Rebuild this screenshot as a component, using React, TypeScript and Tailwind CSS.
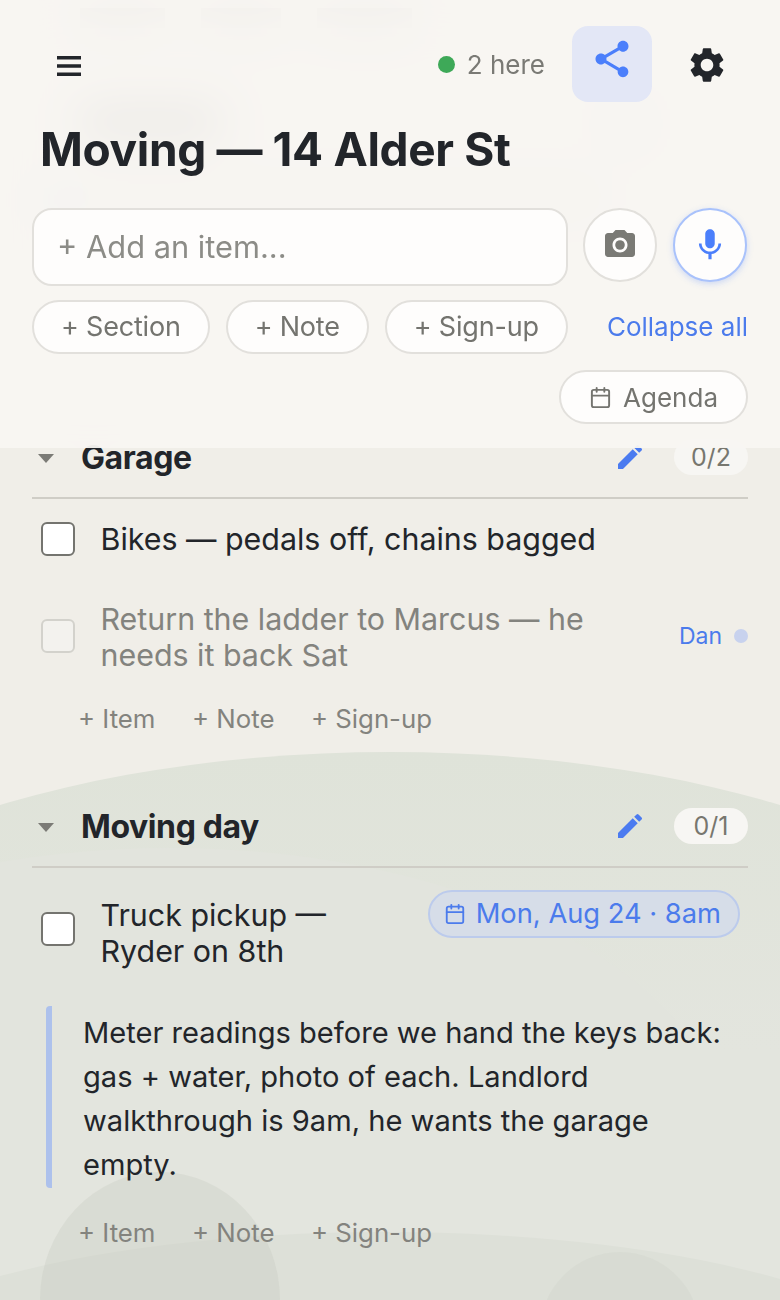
import { Calendar } from "lucide-react"
import { MdCameraAlt, MdEdit, MdMic, MdSettings, MdShare } from "react-icons/md"

function Backdrop() {
  return (
    <svg className="absolute inset-0 h-[1300px] w-[780px]" viewBox="0 0 780 1300" aria-hidden="true">
      <defs>
        <linearGradient id="hill" x1="0" y1="0" x2="0" y2="1">
          <stop offset="0" stopColor="#dfe3d9" />
          <stop offset="0.5" stopColor="#e3e5de" />
        </linearGradient>
      </defs>
      <ellipse cx="390" cy="1052" rx="687" ry="300" fill="url(#hill)" />
      <ellipse cx="170" cy="1150" rx="560" ry="302" fill="#e2e4dd" />
      <rect x="0" y="1050" width="780" height="250" fill="#e3e5de" />
      <ellipse cx="385" cy="1400" rx="570" ry="168" fill="#dde0d8" />
      <ellipse cx="160" cy="1300" rx="120" ry="128" fill="#c4c8bc" fillOpacity="0.3" />
      <ellipse cx="620" cy="1332" rx="80" ry="80" fill="#c4c8bc" fillOpacity="0.18" />
    </svg>
  )
}

function Caret() {
  return (
    <svg width="16" height="9" viewBox="0 0 16 9" className="mt-0.5 shrink-0" aria-hidden="true">
      <polygon points="0,0 16,0 8,9" fill="#7b7b76" />
    </svg>
  )
}

function SectionHead({ title, count }: { title: string; count: string }) {
  return (
    <div className="flex h-[62px] items-center border-b-2 border-[#cfcdc6] pb-5">
      <div className="ml-1.5 w-[43px]">
        <Caret />
      </div>
      <h2 className="flex-1 pt-px text-[32px] leading-10 font-bold tracking-[-0.4px] text-[#22252a]">{title}</h2>
      <MdEdit size={32} className="mr-[28px] text-[#4b7bf0]" />
      <span className="flex h-9 w-[74px] items-center justify-center rounded-full bg-[#f7f6f3] pt-px text-[25px] text-[#77776f]">
        {count}
      </span>
    </div>
  )
}

function Checkbox({ faded }: { faded?: boolean }) {
  return (
    <span
      className={
        faded
          ? "mb-[3px] block h-[34px] w-[34px] shrink-0 rounded-md border-2 border-[#d3d2cc] bg-[#f3f2ee]"
          : "block h-[34px] w-[34px] shrink-0 rounded-md border-2 border-[#74746f] bg-white"
      }
    />
  )
}

function InlineActions() {
  return (
    <div className="flex gap-[36.5px] pl-[46px] text-[25.8px] leading-9 text-[#83837e]">
      <span>+ Item</span>
      <span>+ Note</span>
      <span>+ Sign-up</span>
    </div>
  )
}

function Pill({ label }: { label: string }) {
  return (
    <button className="flex h-[54px] items-center rounded-full border-2 border-[#e2e0dc] bg-[#fefdfc] px-[27px] text-[27px] tracking-[-0.2px] text-[#74746f]">
      {label}
    </button>
  )
}

function Header() {
  return (
    <header className="absolute inset-x-0 top-0 z-10 h-[448px] bg-[#f8f6f3]/90 px-8 pt-[26px] backdrop-blur-xl">
      <div className="flex h-[76px] items-center">
        <svg width="24" height="20" viewBox="0 0 24 20" className="mt-[4px] ml-[25px] text-[#22252a]" aria-hidden="true">
          <path d="M0 0h24v3.6H0zM0 8.2h24v3.6H0zM0 16.4h24V20H0z" fill="currentColor" />
        </svg>
        <div className="ml-auto flex items-center text-[26px] text-[#7a7a75]">
          <span className="mr-3 h-[17px] w-[17px] rounded-full bg-[#3ea958]" />
          2 here
        </div>
        <button className="ml-[27px] flex h-[76px] w-[80px] items-center justify-center rounded-2xl bg-[#e3e7f6]">
          <MdShare size={44} className="mb-[10px] text-[#4b7ffb]" />
        </button>
        <MdSettings size={42} className="mt-[2px] mr-[20px] ml-[34px] text-[#22252a]" />
      </div>
      <h1 className="mt-5 ml-2 text-[46px] leading-[54px] font-bold tracking-[-0.35px] text-[#22252a]">
        Moving — 14 Alder St
      </h1>
      <div className="mt-[32px] flex items-start">
        <div className="flex h-[78px] w-[536px] items-center rounded-[20px] border-2 border-[#e2e0dc] bg-[#fefdfc] pl-[23px] text-[30.8px] text-[#8c8c87]">
          + Add an item...
        </div>
        <button className="ml-[15px] flex h-[74px] w-[74px] items-center justify-center rounded-full border-2 border-[#e2e0dc] bg-[#fefdfc]">
          <MdCameraAlt size={36} className="text-[#7a7a75]" />
        </button>
        <button className="ml-4 flex h-[74px] w-[74px] items-center justify-center rounded-full border-2 border-[#a9c2fb] bg-[#fefdfc] shadow-[0_2px_6px_rgba(75,127,251,0.25)]">
          <MdMic size={38} className="text-[#4b7ffb]" />
        </button>
      </div>
      <div className="mt-[14px] flex items-center gap-4">
        <Pill label="+ Section" />
        <Pill label="+ Note" />
        <Pill label="+ Sign-up" />
        <button className="mb-0.5 ml-auto text-[26px] text-[#4b7bec]">Collapse all</button>
      </div>
      <div className="mt-4 flex justify-end">
        <button className="flex h-[54px] items-center gap-[11px] rounded-full border-2 border-[#e2e0dc] bg-[#fefdfc] px-[28px] text-[26px] text-[#74746f]">
          <Calendar size={23} strokeWidth={2} />
          Agenda
        </button>
      </div>
    </header>
  )
}

// the section scrolled under the header, only visible as a blur
function ScrolledPast() {
  return (
    <div className="h-[437px] pl-20 pt-2">
      <div className="flex gap-9">
        <div className="h-5 w-[85px] bg-[#b4b4ae]" />
        <div className="h-5 w-[80px] bg-[#b4b4ae]" />
        <div className="h-5 w-[95px] bg-[#b4b4ae]" />
      </div>
      <div className="mt-[82px] flex justify-between pr-[140px]">
        <div className="h-6 w-[140px] bg-[#55554f]" />
        <div className="h-7 w-7 bg-[#c0c8e0]" />
      </div>
      <div className="mt-[50px] flex gap-3">
        <div className="h-6 w-6 -translate-x-9 bg-[#8fabf0]" />
        <div className="h-4 w-[520px] -translate-x-9 bg-[#c4c4be]" />
      </div>
    </div>
  )
}

export default function App() {
  return (
    <div className="relative h-[1300px] w-[780px] overflow-hidden bg-[#f0eee8] font-['Inter',sans-serif]">
      <Backdrop />
      <Header />
      <main className="relative px-8">
        <div className="-mx-8">
          <ScrolledPast />
        </div>
        <section>
          <SectionHead title="Garage" count="0/2" />
          <div className="mt-4 flex min-h-12 items-center gap-[25.5px] pl-[9px]">
            <Checkbox />
            <p className="text-[30.4px] leading-9 text-[#22252a]">Bikes — pedals off, chains bagged</p>
          </div>
          <div className="mt-[38px] flex items-center gap-[25.5px] pl-[9px]">
            <Checkbox faded />
            <p className="w-[510px] text-[30.4px] leading-9 text-[#83837e]">Return the ladder to Marcus — he needs it back Sat</p>
            <div className="mb-0.5 ml-auto flex items-center gap-3 text-[23px] text-[#4b7bec]">
              Dan
              <span className="h-[14px] w-[14px] rounded-full bg-[#c8d2ee]" />
            </div>
          </div>
          <div className="mt-7">
            <InlineActions />
          </div>
        </section>
        <section className="mt-[69px]">
          <SectionHead title="Moving day" count="0/1" />
          <div className="mt-[22px] flex items-start pl-[9px]">
            <div className="mt-[22px]">
              <Checkbox />
            </div>
            <p className="ml-[25.5px] w-[300px] pt-[7px] text-[30.4px] leading-9 text-[#22252a]">Truck pickup — Ryder on 8th</p>
            <span className="mr-2 ml-auto flex h-12 items-center gap-2.5 rounded-full border-2 border-[#bccbec] bg-[#d6dde8] pr-[17px] pl-[14px] text-[27.3px] text-[#4b7bec]">
              <Calendar size={22} strokeWidth={2} />
              Mon, Aug 24 · 8am
            </span>
          </div>
          <div className="mt-[37px] ml-[14px] rounded-sm border-l-[6px] border-[#adc1ec] pl-[31px]">
            <p className="w-[650px] pt-[5px] pb-px text-[29.1px] leading-[44px] text-[#22252a]">
              Meter readings before we hand the keys back: gas + water, photo of each. Landlord walkthrough is 9am, he wants the garage empty.
            </p>
          </div>
          <div className="mt-[27px]">
            <InlineActions />
          </div>
        </section>
      </main>
    </div>
  )
}
